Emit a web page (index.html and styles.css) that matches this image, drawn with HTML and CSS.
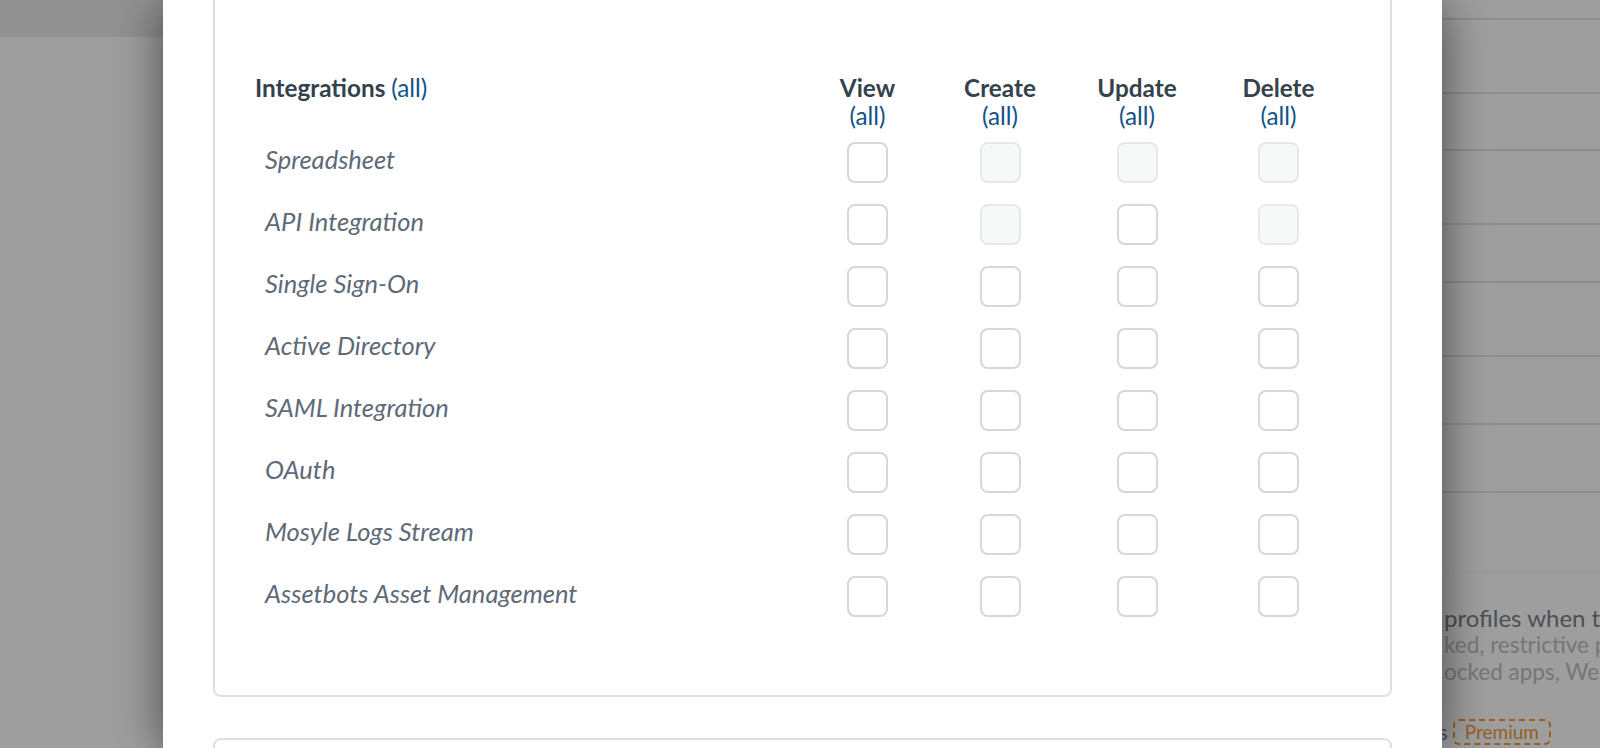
FILE: index.html
```html
<!DOCTYPE html>
<html lang="en">
<head>
<meta charset="utf-8">
<title>Integrations permissions</title>
<link rel="stylesheet" href="styles.css">
</head>
<body>
<div class="backdrop">
  <div class="bd-left">
    <div class="bd-topbar"></div>
  </div>
  <div class="bd-right">
    <div class="bd-row r1"></div>
    <div class="bd-row r2"></div>
    <div class="bd-row r3"></div>
    <div class="bd-row r4"></div>
    <div class="bd-row r5"></div>
    <div class="bd-row r6"></div>
    <div class="bd-row r7"></div>
    <div class="bd-row r8"></div>
    <div class="bd-row r9"></div>
    <div class="bd-text">
      <p class="bd-title">profiles when the device is unenrolled</p>
      <p class="bd-desc">ked, restrictive profiles will be removed</p>
      <p class="bd-desc">ocked apps, Web Clips and settings</p>
      <p class="bd-premium-line">Profiles<span class="premium">Premium</span></p>
    </div>
  </div>
</div>

<div class="overlay">
  <div class="modal">
    <div class="card perm-card">
      <div class="perm-grid">
        <div class="perm-head-main">Integrations <a class="all-link" href="#">(all)</a></div>
        <div class="perm-head">View<br><a class="all-link" href="#">(all)</a></div>
        <div class="perm-head">Create<br><a class="all-link" href="#">(all)</a></div>
        <div class="perm-head">Update<br><a class="all-link" href="#">(all)</a></div>
        <div class="perm-head">Delete<br><a class="all-link" href="#">(all)</a></div>

        <div class="perm-label">Spreadsheet</div>
        <div class="perm-cell"><span class="box"></span></div>
        <div class="perm-cell"><span class="box disabled"></span></div>
        <div class="perm-cell"><span class="box disabled"></span></div>
        <div class="perm-cell"><span class="box disabled"></span></div>

        <div class="perm-label">API Integration</div>
        <div class="perm-cell"><span class="box"></span></div>
        <div class="perm-cell"><span class="box disabled"></span></div>
        <div class="perm-cell"><span class="box"></span></div>
        <div class="perm-cell"><span class="box disabled"></span></div>

        <div class="perm-label">Single Sign-On</div>
        <div class="perm-cell"><span class="box"></span></div>
        <div class="perm-cell"><span class="box"></span></div>
        <div class="perm-cell"><span class="box"></span></div>
        <div class="perm-cell"><span class="box"></span></div>

        <div class="perm-label">Active Directory</div>
        <div class="perm-cell"><span class="box"></span></div>
        <div class="perm-cell"><span class="box"></span></div>
        <div class="perm-cell"><span class="box"></span></div>
        <div class="perm-cell"><span class="box"></span></div>

        <div class="perm-label">SAML Integration</div>
        <div class="perm-cell"><span class="box"></span></div>
        <div class="perm-cell"><span class="box"></span></div>
        <div class="perm-cell"><span class="box"></span></div>
        <div class="perm-cell"><span class="box"></span></div>

        <div class="perm-label">OAuth</div>
        <div class="perm-cell"><span class="box"></span></div>
        <div class="perm-cell"><span class="box"></span></div>
        <div class="perm-cell"><span class="box"></span></div>
        <div class="perm-cell"><span class="box"></span></div>

        <div class="perm-label">Mosyle Logs Stream</div>
        <div class="perm-cell"><span class="box"></span></div>
        <div class="perm-cell"><span class="box"></span></div>
        <div class="perm-cell"><span class="box"></span></div>
        <div class="perm-cell"><span class="box"></span></div>

        <div class="perm-label">Assetbots Asset Management</div>
        <div class="perm-cell"><span class="box"></span></div>
        <div class="perm-cell"><span class="box"></span></div>
        <div class="perm-cell"><span class="box"></span></div>
        <div class="perm-cell"><span class="box"></span></div>
      </div>
    </div>
    <div class="card next-card"></div>
  </div>
</div>
</body>
</html>
```

FILE: styles.css
```css
* { box-sizing: border-box; }

html, body {
  margin: 0;
  padding: 0;
  height: 100%;
  overflow: hidden;
}

body {
  font-family: Lato, "Open Sans", "Liberation Sans", sans-serif;
  background: #ffffff;
}

/* ---------- backdrop page (under the overlay) ---------- */
.backdrop {
  display: grid;
  grid-template-columns: 800px 1fr;
  height: 748px;
  overflow: hidden;
}

.bd-topbar {
  height: 37px;
  background: #eaeaeb;
}

.bd-right {
  display: flex;
  flex-direction: column;
  overflow: hidden;
}

.bd-row {
  border-bottom: 2px solid #e0e5e4;
}
.bd-row.r1 { height: 20px; }
.bd-row.r2 { height: 74px; }
.bd-row.r3 { height: 57px; }
.bd-row.r4 { height: 74px; }
.bd-row.r5 { height: 58px; }
.bd-row.r6 { height: 74px; }
.bd-row.r7 { height: 68px; }
.bd-row.r8 { height: 68px; }
.bd-row.r9 { height: 80px; border-bottom: 1px solid #f3f3f3; }

.bd-text {
  padding: 31px 0 0 644px;
  white-space: nowrap;
}

.bd-text p {
  margin: 0;
}

.bd-title {
  font-size: 24px;
  line-height: 27px;
  color: #7a828b;
}

.bd-desc {
  font-size: 22.5px;
  line-height: 27px;
  color: #bcbfc1;
}

.bd-premium-line {
  margin: 34px 0 0 -68px !important;
  font-size: 22px;
  line-height: 26px;
  color: #7a828b;
  display: flex;
  align-items: center;
}

.premium {
  margin-left: 5px;
  padding: 0 10px;
  height: 26px;
  line-height: 22px;
  font-size: 19px;
  color: #f09b35;
  border: 2px dashed #f09b35;
  border-radius: 6px;
}

/* ---------- overlay + modal ---------- */
.overlay {
  position: fixed;
  inset: 0;
  background: rgba(0, 0, 0, 0.38);
}

.modal {
  margin-left: 163px;
  width: 1279px;
  height: 100%;
  background: #ffffff;
  padding: 0 50px;
  box-shadow: 0 4px 45px rgba(0, 0, 0, 0.55);
  overflow: hidden;
}

.card {
  border: 2px solid #dedfe0;
  border-radius: 8px;
  background: #fff;
}

.perm-card {
  border-top: 0;
  border-top-left-radius: 0;
  border-top-right-radius: 0;
  padding: 74px 40px 68px 40px;
}

.next-card {
  margin-top: 41px;
  height: 60px;
}

/* ---------- permissions grid ---------- */
.perm-grid {
  display: grid;
  grid-template-columns: 1fr 131px 134px 140px 143px;
  grid-template-rows: 57px;
  grid-auto-rows: 62px;
  color: #33424c;
}

.perm-head-main,
.perm-head {
  font-size: 24.3px;
  line-height: 28px;
  font-weight: 700;
}

.perm-head {
  text-align: center;
}

.all-link {
  font-weight: 400;
  color: #135388;
  text-decoration: none;
}

.perm-label {
  align-self: center;
  padding: 0 0 6px 10px;
  font-size: 25.5px;
  line-height: 30px;
  font-style: italic;
  color: #5e6a78;
}

.perm-cell {
  display: flex;
  align-items: center;
  justify-content: center;
}

.box {
  display: block;
  width: 41px;
  height: 41px;
  border: 2px solid #d2d8db;
  border-radius: 8px;
  background: #ffffff;
}

.box.disabled {
  background: #f7f8f8;
  border-color: #e6e9ea;
}
```
